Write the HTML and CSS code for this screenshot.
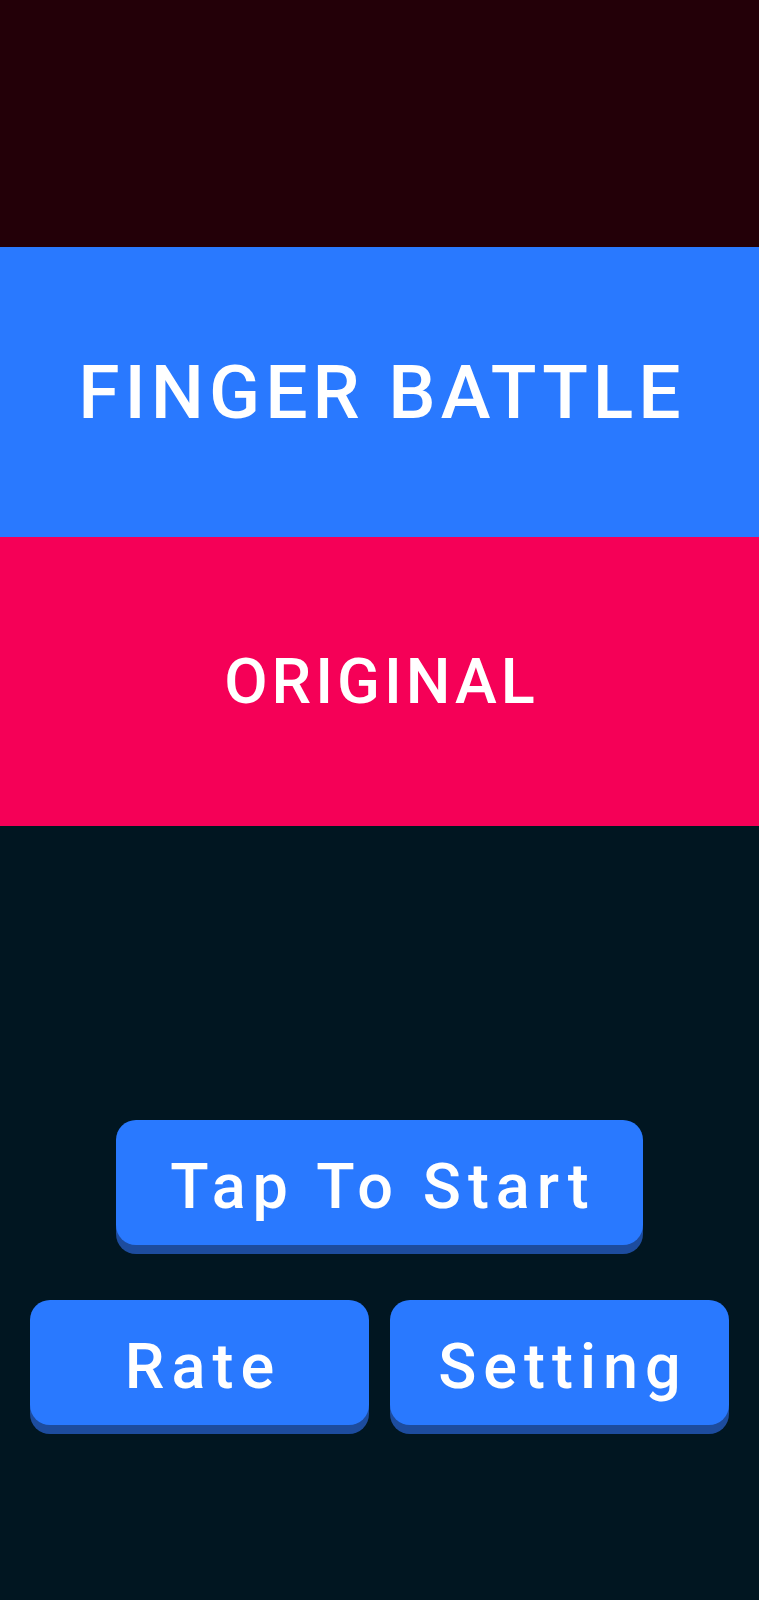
FILE: index.html
```html
<!DOCTYPE html>
<html>
<head>
<meta charset="utf-8">
<link rel="stylesheet" href="styles.css">
</head>
<body>
<div class="screen">
  <div class="top"></div>
  <div class="band band-blue"><h1 class="title">FINGER BATTLE</h1></div>
  <div class="band band-pink"><h2 class="mode">ORIGINAL</h2></div>
  <div class="menu">
    <button class="btn btn-start">Tap To Start</button>
    <div class="row">
      <button class="btn btn-half">Rate</button>
      <button class="btn btn-half">Setting</button>
    </div>
  </div>
</div>
</body>
</html>
```
FILE: styles.css
```css
html, body {
  margin: 0;
  padding: 0;
  background: #011621;
}
.screen {
  width: 759px;
  height: 1600px;
  display: flex;
  flex-direction: column;
  font-family: Roboto, "Liberation Sans", sans-serif;
  color: #ffffff;
}
.top {
  height: 247px;
  background: #230008;
}
.band {
  display: flex;
  align-items: center;
  justify-content: center;
}
.band-blue {
  height: 290px;
  background: #2979ff;
}
.band-pink {
  height: 289px;
  background: #f50057;
}
.title {
  margin: 0;
  padding-left: 5px;
  font-size: 75px;
  font-weight: 500;
  letter-spacing: 5px;
  line-height: 1;
}
.mode {
  margin: 0;
  padding-left: 4px;
  font-size: 63px;
  font-weight: 500;
  letter-spacing: 4px;
  line-height: 1;
}
.menu {
  flex: 1;
  display: flex;
  flex-direction: column;
  align-items: center;
  padding-top: 294px;
}
.btn {
  border: none;
  background: #2979ff;
  color: #ffffff;
  font-family: Roboto, "Liberation Sans", sans-serif;
  font-size: 63px;
  font-weight: 500;
  letter-spacing: 7px;
  height: 125px;
  border-radius: 20px;
  box-shadow: 0 9px 0 #1d4c9e;
  padding: 8px 0 0 7px;
  line-height: 1;
}
.btn-start {
  width: 527px;
}
.row {
  display: flex;
  gap: 21px;
  margin-top: 55px;
}
.btn-half {
  width: 339px;
}
```
